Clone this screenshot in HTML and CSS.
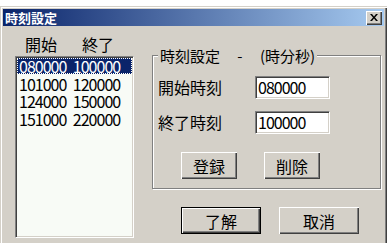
FILE: index.html
```html
<!DOCTYPE html>
<html lang="ja">
<head>
  <meta charset="UTF-8" />
  <meta name="viewport" content="width=device-width, initial-scale=1" />
  <title>時刻設定</title>
  <link rel="stylesheet" href="styles.css">
</head>
<body>

  <div class="window">
    <div class="titlebar">
      <span class="title">時刻設定</span>
      <span class="close">
        <svg width="8" height="7" viewBox="0 0 8 7"><path d="M0 0h2l2 2.5L6 0h2L5 3.5 8 7H6L4 4.5 2 7H0l3-3.5z" fill="#000"/></svg>
      </span>
    </div>

    <div class="body">
      <div class="left">
        <div class="cols"><span>開始</span><span>終了</span></div>
        <ul class="list">
          <li class="sel">080000 100000</li>
          <li>101000 120000</li>
          <li>124000 150000</li>
          <li>151000 220000</li>
        </ul>
      </div>

      <div class="right">
        <div class="group">
          <div class="legend">時刻設定 - (時分秒)</div>
          <div class="field">
            <span class="label">開始時刻</span>
            <input class="time" type="text" value="080000" />
          </div>
          <div class="field second">
            <span class="label">終了時刻</span>
            <input class="time" type="text" value="100000" />
          </div>
          <div class="group-btns">
            <button class="btn small">登録</button>
            <button class="btn small">削除</button>
          </div>
        </div>
        <div class="dialog-btns">
          <button class="btn wide default">了解</button>
          <button class="btn wide">取消</button>
        </div>
      </div>
    </div>
  </div>

</body>
</html>
```

FILE: styles.css
```css
body {
  margin: 0;
  background: #fff;
  font-family: "Noto Sans CJK JP", "Noto Sans", sans-serif;
  font-size: 15px;
  color: #000;
}
.window {
  margin-top: 6px;
  width: 387px;
  height: 260px;
  box-sizing: border-box;
  padding: 3px;
  background: #d4d0c8;
  box-shadow: inset 1px 1px #d4d0c8, inset 2px 2px #fff, inset -1px -1px #404040, inset -2px -2px #808080;
}
.titlebar {
  height: 17px;
  display: flex;
  align-items: center;
  justify-content: space-between;
  padding: 0 2px 0 2px;
  background: linear-gradient(to right, #0a246a, #a6caf0);
}
.title {
  color: #fff;
  font-weight: bold;
  font-size: 13px;
  line-height: 17px;
}
.close {
  width: 16px;
  height: 14px;
  display: flex;
  align-items: center;
  justify-content: center;
  background: #d4d0c8;
  box-shadow: inset 1px 1px #fff, inset -1px -1px #404040, inset -2px -2px #808080;
}
.body {
  display: flex;
  padding-left: 12px;
}
.left {
  width: 119px;
}
.cols {
  margin-top: 9px;
  padding-left: 10px;
  line-height: 18px;
  font-size: 16px;
  display: flex;
  gap: 25px;
}
.list {
  list-style: none;
  margin: 3px 0 0;
  padding: 1px 0 0;
  height: 182px;
  box-sizing: border-box;
  border: 1px solid;
  border-color: #808080 #fff #fff #808080;
  box-shadow: inset 1px 1px #404040, inset -1px -1px #d4d0c8;
  background: #f8fbf6;
}
.list li {
  margin: 0 1px;
  padding-left: 2px;
  height: 17.5px;
  line-height: 17px;
  font-size: 16px;
  letter-spacing: -1px;
  word-spacing: 4px;
}
.list li.sel {
  height: 16px;
  line-height: 16px;
  margin-bottom: 1.5px;
  background: #0a246a;
  color: #fff;
  outline: 1px dotted #fff;
  outline-offset: -1px;
}
.right {
  margin-left: 18px;
}
.group {
  margin-top: 29px;
  width: 227px;
  padding-bottom: 9px;
  border: 1px solid #808080;
  box-shadow: inset 1px 1px #fff, 1px 1px #fff;
}
.legend {
  width: fit-content;
  margin: -9px 0 0 5px;
  padding: 0 2px;
  line-height: 18px;
  background: #d4d0c8;
  word-spacing: 14px;
}
.field {
  display: flex;
  align-items: center;
  margin-top: 10px;
  padding-left: 5px;
}
.field.second {
  margin-top: 11px;
}
.label {
  width: 97px;
  font-size: 16px;
}
.time {
  width: 75px;
  height: 23px;
  box-sizing: border-box;
  margin: 0;
  padding: 0 0 0 2px;
  font-family: inherit;
  font-size: 16px;
  letter-spacing: -1px;
  background: #fff;
  border: 1px solid;
  border-color: #808080 #fff #fff #808080;
  box-shadow: inset 1px 1px #404040, inset -1px -1px #d4d0c8;
  outline: none;
}
.group-btns {
  display: flex;
  gap: 27px;
  margin: 18px 0 0 28px;
}
.dialog-btns {
  display: flex;
  gap: 18px;
  margin: 18px 0 0 29px;
}
.btn {
  height: 27px;
  box-sizing: border-box;
  margin: 0;
  padding: 0;
  font-family: inherit;
  font-size: 16px;
  color: #000;
  background: #d4d0c8;
  border: none;
  box-shadow: inset 1px 1px #fff, inset -1px -1px #404040, inset -2px -2px #808080;
}
.btn.small {
  width: 56px;
}
.btn.wide {
  width: 80px;
}
.btn.default {
  border: 1px solid #000;
}
```
